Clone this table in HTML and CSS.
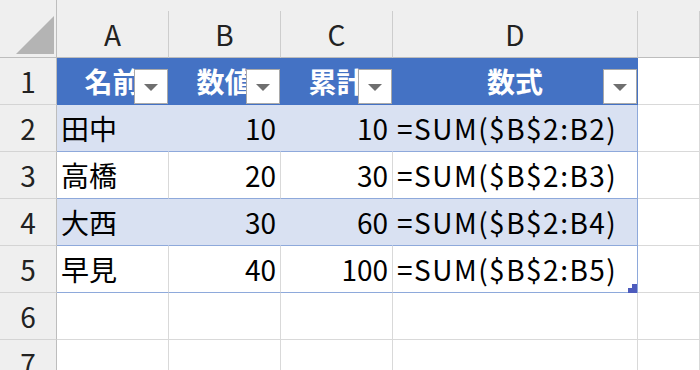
FILE: index.html
```html
<!DOCTYPE html>
<html lang="ja">
  <head>
    <meta charset="UTF-8" />
    <meta name="viewport" content="width=device-width, initial-scale=1.0" />
    <title>Sheet1</title>
    <link rel="stylesheet" href="styles.css">
  </head>
  <body>
    <div class="sheet">
      <div class="strip"></div>

      <div class="grid">
        <!-- column headings -->
        <div class="cell corner">
          <svg width="38" height="38" viewBox="0 0 38 38">
            <polygon points="38,0 38,38 0,38" fill="#b4b4b4" />
          </svg>
        </div>
        <div class="cell colhead">A</div>
        <div class="cell colhead">B</div>
        <div class="cell colhead">C</div>
        <div class="cell colhead">D</div>
        <div class="cell colhead"></div>

        <!-- row 1: table header -->
        <div class="cell rowhead">1</div>
        <div class="cell th">名前<span class="filter"></span></div>
        <div class="cell th">数値<span class="filter"></span></div>
        <div class="cell th">累計<span class="filter"></span></div>
        <div class="cell th last">数式<span class="filter"></span></div>
        <div class="cell"></div>

        <div class="cell rowhead">2</div>
        <div class="cell band">田中</div>
        <div class="cell band num">10</div>
        <div class="cell band num">10</div>
        <div class="cell band last formula">=SUM($B$2:B2)</div>
        <div class="cell"></div>

        <div class="cell rowhead">3</div>
        <div class="cell plain">高橋</div>
        <div class="cell plain num">20</div>
        <div class="cell plain num">30</div>
        <div class="cell plain last formula">=SUM($B$2:B3)</div>
        <div class="cell"></div>

        <div class="cell rowhead">4</div>
        <div class="cell band">大西</div>
        <div class="cell band num">30</div>
        <div class="cell band num">60</div>
        <div class="cell band last formula">=SUM($B$2:B4)</div>
        <div class="cell"></div>

        <div class="cell rowhead">5</div>
        <div class="cell plain">早見</div>
        <div class="cell plain num">40</div>
        <div class="cell plain num">100</div>
        <div class="cell plain last formula">=SUM($B$2:B5)
          <svg class="handle" width="9" height="9" viewBox="0 0 9 9">
            <polygon points="4,0 9,0 9,9 0,9 0,4 4,4" fill="#4d5bbd" />
          </svg>
        </div>
        <div class="cell"></div>

        <div class="cell rowhead">6</div>
        <div class="cell"></div>
        <div class="cell"></div>
        <div class="cell"></div>
        <div class="cell"></div>
        <div class="cell"></div>

        <div class="cell rowhead">7</div>
        <div class="cell"></div>
        <div class="cell"></div>
        <div class="cell"></div>
        <div class="cell"></div>
        <div class="cell"></div>
      </div>
    </div>
  </body>
</html>
```

FILE: styles.css
```css
* {
  margin: 0;
  padding: 0;
  box-sizing: border-box;
}

body {
  font-family: "Noto Sans CJK JP", sans-serif;
  font-size: 28px;
  color: #000;
  background: #fff;
}

.sheet {
  width: 700px;
  height: 370px;
  overflow: hidden;
}

.strip {
  height: 11px;
  background: #efefef;
}

.grid {
  display: grid;
  grid-template-columns: 57px 112px 112px 112px 245px 1fr;
  grid-auto-rows: 47px;
}

.cell {
  position: relative;
  display: flex;
  align-items: center;
  padding: 0 4px;
  border-right: 1px solid #d9d9d9;
  border-bottom: 1px solid #d9d9d9;
  white-space: nowrap;
}

/* sheet headings */
.corner {
  background: #efefef;
  justify-content: flex-end;
  align-items: flex-end;
  padding: 0 2px 3px 0;
  border-right-color: #bdbdbd;
  border-bottom-color: #bdbdbd;
  margin-top: -11px;
  height: 58px;
}

.colhead {
  justify-content: center;
  background: #efefef;
  color: #222;
  border-right-color: #cdcdcd;
  border-bottom-color: #bdbdbd;
}

.rowhead {
  justify-content: center;
  background: #efefef;
  color: #222;
  border-right-color: #bdbdbd;
  border-bottom-color: #d4d4d4;
}

/* table */
.th {
  justify-content: center;
  background: #4472c4;
  color: #fff;
  font-weight: bold;
  border-right-color: #4472c4;
  border-bottom-color: #4472c4;
}

.filter {
  position: absolute;
  right: 0;
  bottom: 0;
  width: 34px;
  height: 35px;
  background: #fff;
  border: 1px solid #a9a9a9;
  display: flex;
  align-items: center;
  justify-content: center;
}

.filter::after {
  content: "";
  margin-top: 2px;
  border-left: 7px solid transparent;
  border-right: 7px solid transparent;
  border-top: 7px solid #6f6f6f;
}

.band {
  background: #d9e1f2;
  border-right-color: #d9e1f2;
  border-bottom-color: #8ea9db;
}

.plain {
  border-bottom-color: #8ea9db;
}

.num {
  justify-content: flex-end;
}

.formula {
  letter-spacing: 1.5px;
}

.last {
  border-right-color: #8ea9db;
}

.th.last {
  border-right-color: #4472c4;
}

.handle {
  position: absolute;
  right: 0;
  bottom: -1px;
}
```
